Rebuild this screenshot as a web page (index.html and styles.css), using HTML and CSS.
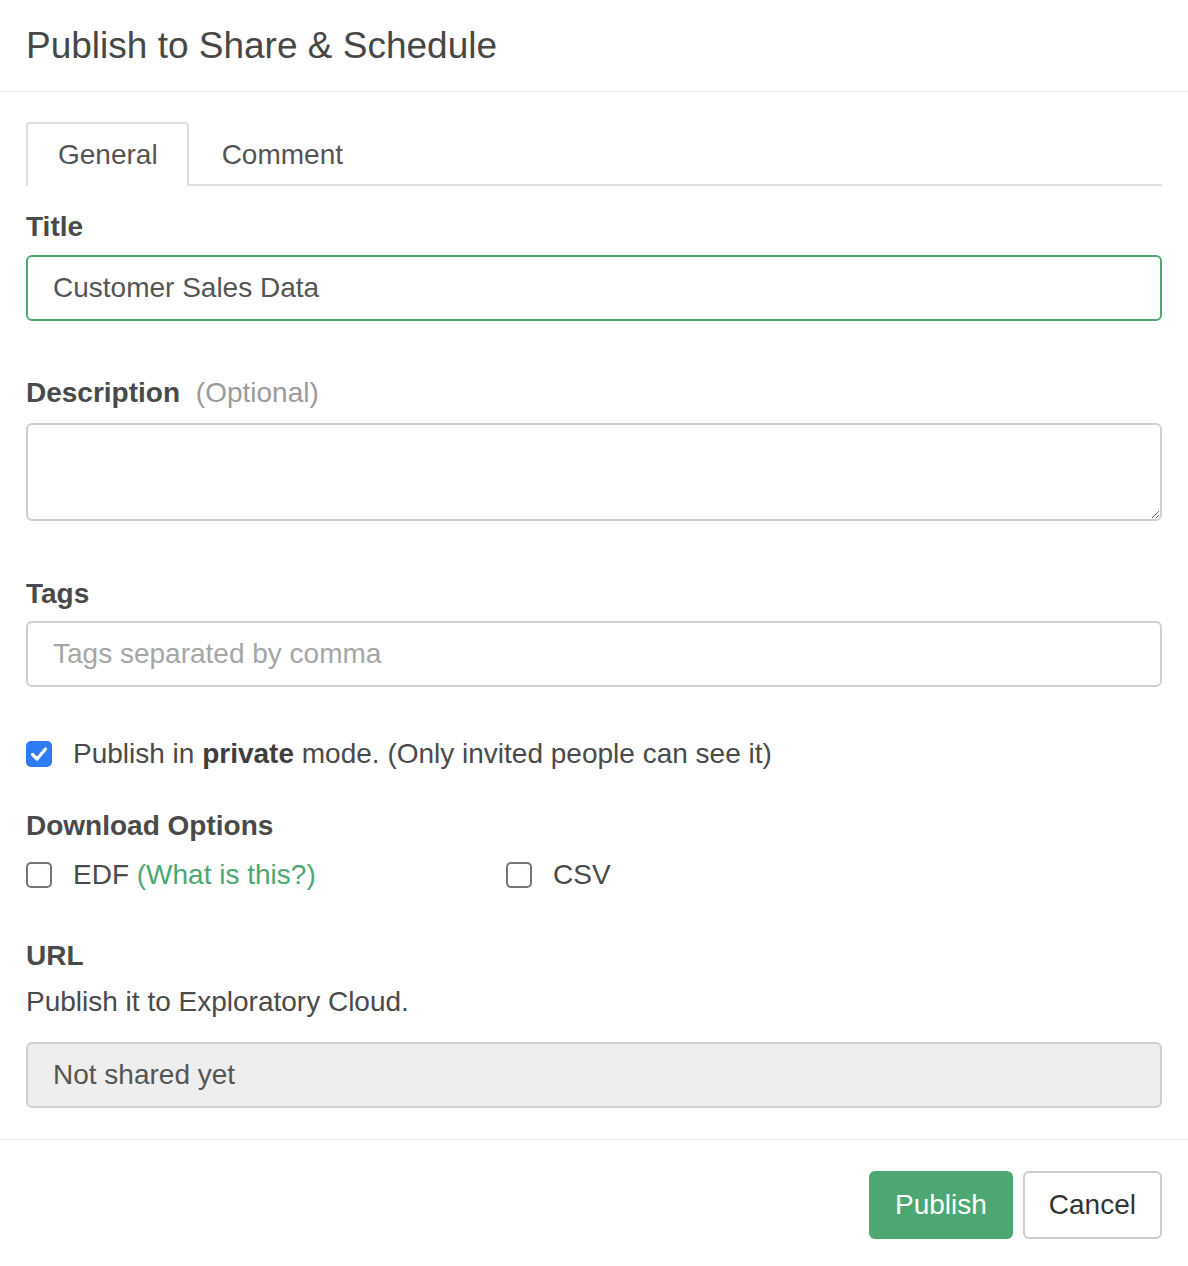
FILE: index.html
```html
<!DOCTYPE html>
<html lang="en">
<head>
<meta charset="utf-8">
<title>Publish to Share &amp; Schedule</title>
<link rel="stylesheet" href="styles.css">
</head>
<body>
<div class="modal">
  <div class="modal-header">
    <h4 class="modal-title">Publish to Share &amp; Schedule</h4>
  </div>
  <div class="modal-body">
    <ul class="tabs">
      <li class="tab active">General</li>
      <li class="tab">Comment</li>
    </ul>

    <div class="group g-title">
      <label class="label">Title</label>
      <input class="field focus" type="text" value="Customer Sales Data">
    </div>

    <div class="group g-desc">
      <label class="label">Description <span class="optional">(Optional)</span></label>
      <textarea class="field area"></textarea>
    </div>

    <div class="group g-tags">
      <label class="label">Tags</label>
      <input class="field" type="text" placeholder="Tags separated by comma">
    </div>

    <div class="check-row private">
      <span class="box checked"><svg viewBox="0 0 26 26" width="26" height="26"><path d="M6.5 13.5 L11 18 L19.5 8" fill="none" stroke="#fff" stroke-width="3.2" stroke-linecap="round" stroke-linejoin="round"/></svg></span>
      <span class="check-text">Publish in <b>private</b> mode. (Only invited people can see it)</span>
    </div>

    <div class="label dl-label">Download Options</div>
    <div class="options">
      <div class="check-row opt edf">
        <span class="box"></span>
        <span class="check-text">EDF <a class="link">(What is this?)</a></span>
      </div>
      <div class="check-row opt">
        <span class="box"></span>
        <span class="check-text">CSV</span>
      </div>
    </div>

    <div class="label url-label">URL</div>
    <p class="help">Publish it to Exploratory Cloud.</p>
    <input class="field disabled" type="text" value="Not shared yet" readonly>
  </div>
  <div class="modal-footer">
    <button class="btn btn-primary">Publish</button>
    <button class="btn btn-default">Cancel</button>
  </div>
</div>
</body>
</html>
```

FILE: styles.css
```css
* { box-sizing: border-box; }
html, body {
  margin: 0;
  padding: 0;
  background: #fff;
}
body {
  font-family: "Liberation Sans", Arial, Helvetica, sans-serif;
  font-size: 28px;
  line-height: 40px;
  color: #4a4a4a;
}
.modal {
  width: 1188px;
  height: 1266px;
  background: #fff;
}
.modal-header {
  padding: 26px 26px 25px;
  border-bottom: 1px solid #e5e5e5;
}
.modal-title {
  margin: 0;
  font-size: 37px;
  font-weight: normal;
  line-height: 40px;
  color: #474747;
}
.modal-body {
  padding: 30px 26px 31px;
}
.tabs {
  list-style: none;
  margin: 0;
  padding: 0;
  display: flex;
  border-bottom: 2px solid #dedede;
}
.tab {
  padding: 11px 29px 9px;
  line-height: 40px;
  margin-bottom: -2px;
  margin-right: 2px;
  border: 2px solid transparent;
  border-bottom: none;
  border-radius: 4px 4px 0 0;
  color: #555;
}
.tab.active {
  border-color: #dedede;
  background: #fff;
  padding-bottom: 11px;
  padding-left: 30px;
}
.group { display: flex; flex-direction: column; }
.g-title { margin-top: 21px; }
.g-desc { margin-top: 52px; }
.g-tags { margin-top: 53px; }
.label {
  display: block;
  font-weight: bold;
  line-height: 40px;
  margin-bottom: 8px;
  color: #4a4a4a;
}
.g-desc .label { margin-bottom: 10px; }
.g-tags .label { margin-bottom: 7px; }
.optional {
  font-weight: normal;
  color: #9b9b9b;
  margin-left: 8px;
}
.field {
  display: block;
  width: 100%;
  height: 66px;
  padding: 0 25px;
  font-family: inherit;
  font-size: 28px;
  color: #555;
  background: #fff;
  border: 2px solid #d0d0d0;
  border-radius: 6px;
  outline: none;
  margin: 0;
}
.field::placeholder { color: #a6a6a6; }
.field.focus { border-color: #4da772; }
.field.area {
  height: 98px;
  padding: 12px 25px;
  resize: vertical;
}
.field.disabled {
  background: #eeeeee;
  color: #555;
}
.check-row {
  display: flex;
  align-items: center;
  line-height: 40px;
}
.private { margin-top: 47px; }
.box {
  width: 26px;
  height: 26px;
  flex: none;
  border: 2px solid #767676;
  border-radius: 5px;
  background: #fff;
  margin-right: 21px;
  display: flex;
}
.box.checked {
  background: #2f7bf5;
  border-color: #2f7bf5;
}
.box.checked svg { margin: -2px; }
.check-text { color: #4a4a4a; }
.check-text b { color: #3d3d3d; }
.dl-label { margin-top: 32px; margin-bottom: 9px; }
.options { display: flex; }
.opt.edf { width: 480px; }
.link { color: #4da772; text-decoration: none; }
.url-label { margin-top: 41px; margin-bottom: 6px; }
.help { margin: 0 0 20px; line-height: 40px; }
.modal-footer {
  border-top: 1px solid #e5e5e5;
  padding: 31px 26px 28px;
  display: flex;
  justify-content: flex-end;
  gap: 10px;
}
.btn {
  font-family: inherit;
  font-size: 28px;
  line-height: 40px;
  height: 68px;
  padding: 0 24px;
  border-radius: 6px;
  border: 2px solid transparent;
  cursor: pointer;
}
.btn-primary {
  background: #4da772;
  border-color: #4da772;
  color: #fff;
}
.btn-default {
  background: #fff;
  border-color: #cccccc;
  color: #333;
}
```
